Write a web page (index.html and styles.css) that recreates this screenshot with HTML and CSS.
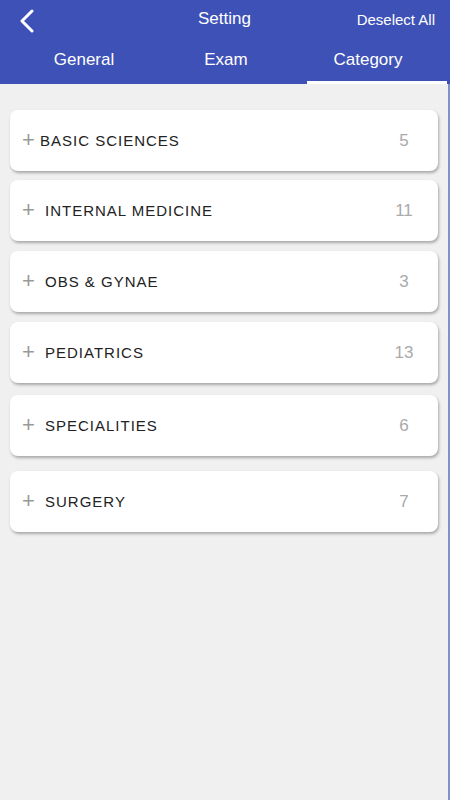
FILE: index.html
```html
<!DOCTYPE html>
<html>
<head>
  <meta charset="UTF-8">
  <title>Setting</title>
  <link rel="stylesheet" href="styles.css">
</head>
<body>
<div class="app">
  <div class="header">
    <div class="topbar">
      <a class="back" href="#">
        <svg width="16" height="24" viewBox="0 0 16 24"><path d="M13 2 L3 12 L13 22" fill="none" stroke="#fff" stroke-width="3" stroke-linecap="round" stroke-linejoin="round"/></svg>
      </a>
      <div class="title">Setting</div>
      <a class="deselect" href="#">Deselect All</a>
    </div>
    <div class="tabs">
      <div class="tab">General</div>
      <div class="tab">Exam</div>
      <div class="tab active">Category</div>
    </div>
  </div>

  <div class="content">
    <div class="card first">
      <span class="plus">+</span><span class="name tight">BASIC SCIENCES</span><span class="count">5</span>
    </div>
    <div class="card">
      <span class="plus">+</span><span class="name">INTERNAL MEDICINE</span><span class="count">11</span>
    </div>
    <div class="card">
      <span class="plus">+</span><span class="name">OBS &amp; GYNAE</span><span class="count">3</span>
    </div>
    <div class="card more">
      <span class="plus">+</span><span class="name">PEDIATRICS</span><span class="count">13</span>
    </div>
    <div class="card wide">
      <span class="plus">+</span><span class="name">SPECIALITIES</span><span class="count">6</span>
    </div>
    <div class="card">
      <span class="plus">+</span><span class="name">SURGERY</span><span class="count">7</span>
    </div>
  </div>
</div>
</body>
</html>
```

FILE: styles.css
```css
html, body { margin: 0; padding: 0; }
body { font-family: "Liberation Sans", Arial, sans-serif; background: #f0f0f0; }
.app { width: 450px; height: 800px; display: flex; flex-direction: column; }

.header { background: #3d51b6; color: #fff; height: 84px; display: flex; flex-direction: column; }
.topbar { height: 38px; display: flex; align-items: center; }
.back { display: flex; align-items: center; padding: 4px 0 0 19px; width: 60px; }
.title { flex: 1; text-align: center; font-size: 17px; }
.deselect { color: #fff; text-decoration: none; font-size: 15px; width: 80px; text-align: right; padding-right: 15px; margin-left: -15px; }
.tabs { display: flex; flex: 1; padding: 0 11px 0 13px; }
.tab { flex: 1; display: flex; align-items: center; justify-content: center; font-size: 17px; padding-bottom: 3px; position: relative; }
.tab.active::after { content: ""; position: absolute; left: 10px; right: -8px; bottom: 0; height: 3px; background: #fff; }

.content { flex: 1; border-right: 2px solid #8191c6; padding: 26px 10px 0 10px; }
.card { background: #fff; border-radius: 8px; height: 61px; display: flex; align-items: center; padding: 0 22px 0 12px; margin-bottom: 10px; box-shadow: 1px 2px 3px rgba(0,0,0,0.3); }
.card.first { margin-bottom: 9px; }
.card.more { margin-bottom: 12px; }
.card.wide { margin-bottom: 15px; }
.plus { color: #999; font-size: 22px; width: 23px; line-height: 1; margin-top: -2px; }
.name { flex: 1; font-size: 15px; letter-spacing: 1px; color: #222; }
.name.tight { margin-left: -5px; }
.count { color: #aaa; font-size: 17px; width: 24px; text-align: center; }
```
